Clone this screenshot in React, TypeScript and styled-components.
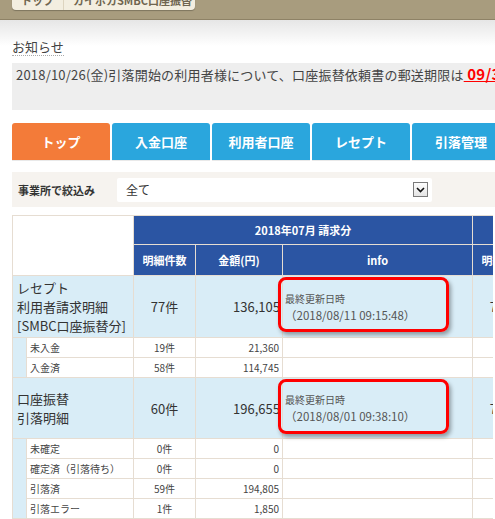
import React from "react";
import styled, { createGlobalStyle } from "styled-components";

const GlobalStyle = createGlobalStyle`
  html, body {
    margin: 0;
    padding: 0;
    background: #fff;
  }
  body {
    width: 495px;
    height: 519px;
    overflow: hidden;
    font-family: "Noto Sans CJK JP", "DejaVu Sans", sans-serif;
    color: #333;
  }
`;

const TopBar = styled.div`
  display: flex;
  align-items: flex-start;
  height: 19px;
  background: #a89c7e;
  border-bottom: 1px solid #8e8266;
  padding-left: 12px;
  overflow: hidden;
`;

const Crumbs = styled.div`
  display: flex;
  margin-top: -9px;
  height: 19px;
  background: #f3eee0;
  border-radius: 0 0 4px 4px;
  box-shadow: 0 1px 1px rgba(0, 0, 0, 0.25);
  font-size: 11px;
  font-weight: bold;
  color: #6f6550;
`;

const Crumb = styled.span<{ $w: number }>`
  width: ${(p) => p.$w}px;
  box-sizing: border-box;
  padding-left: 9px;
  line-height: 19px;
  white-space: nowrap;
  & + & {
    border-left: 1px solid #ddd4bf;
  }
`;

const Content = styled.div`
  display: flex;
  flex-direction: column;
  width: 495px;
  box-sizing: border-box;
  padding-left: 12px;
  overflow: hidden;
  background: linear-gradient(#e6e6e6 0, #fff 26px) no-repeat;
`;

const Heading = styled.h2`
  align-self: flex-start;
  margin: 19px 0 0;
  font-size: 13px;
  font-weight: normal;
  line-height: 16px;
  color: #444;
  border-bottom: 1px dotted #aaa;
`;

const Notice = styled.div`
  margin-top: 7px;
  width: 520px;
  height: 47px;
  box-sizing: border-box;
  padding: 2px 0 0 4px;
  background: #eeeeee;
  font-size: 13px;
  letter-spacing: 0.2px;
  line-height: 18px;
  color: #444;
  white-space: nowrap;
  overflow: hidden;
`;

const Deadline = styled.span`
  color: #f00;
  font-weight: bold;
  font-size: 15px;
  text-decoration: underline;
`;

const Tabs = styled.nav`
  display: flex;
  gap: 2px;
  margin-top: 13px;
  width: 540px;
`;

const Tab = styled.div<{ $active?: boolean }>`
  flex: 0 0 98px;
  height: 37px;
  display: flex;
  align-items: center;
  justify-content: center;
  border-radius: 3px 3px 0 0;
  background: ${(p) => (p.$active ? "#f37b39" : "#2aa6dd")};
  color: #fff;
  font-size: 13px;
  font-weight: bold;
  box-shadow: 0 1px 0 #e9e9e9;
`;

const Filter = styled.div`
  display: flex;
  align-items: center;
  margin-top: 12px;
  width: 520px;
  height: 35px;
  background: #f6f3ef;
`;

const FilterLabel = styled.span`
  width: 105px;
  padding-left: 6px;
  box-sizing: border-box;
  font-size: 11px;
  font-weight: bold;
  color: #333;
`;

const Select = styled.div`
  width: 315px;
  height: 24px;
  box-sizing: border-box;
  display: flex;
  align-items: center;
  justify-content: space-between;
  padding: 0 4px 0 9px;
  background: #fff;
  border-radius: 2px;
  font-size: 12px;
  color: #333;
`;

const Arrow = styled.span`
  width: 15px;
  height: 15px;
  box-sizing: border-box;
  border: 1px solid #7a7a7a;
  background: linear-gradient(#fdfdfd, #e4e4e4);
  display: flex;
  align-items: center;
  justify-content: center;
`;

const TableWrap = styled.div`
  margin-top: 8px;
  width: 481px;
  overflow: hidden;
`;

const Table = styled.table`
  border-collapse: collapse;
  table-layout: fixed;
  width: 799px;
`;

const Col = styled.col<{ $w: number }>`
  width: ${(p) => p.$w}px;
`;

const Cell = styled.td`
  border: 1px solid #e6ddd2;
  padding: 0;
  vertical-align: middle;
`;

const Corner = styled(Cell)`
  background: #fff;
`;

const HeadCell = styled(Cell).attrs({ as: "th" })<{ $h: number }>`
  height: ${(p) => p.$h}px;
  background: #2b55a3;
  color: #fff;
  font-size: 11px;
  font-weight: bold;
  text-align: center;
`;

const MainLabel = styled(Cell)<{ $h: number }>`
  height: ${(p) => p.$h}px;
  background: #d9edf7;
  padding: 1px 0 1px 4px;
  font-size: 13px;
  line-height: 19px;
  color: #333;
  white-space: nowrap;
`;

const MainCount = styled(Cell)`
  background: #d9edf7;
  text-align: center;
  font-size: 13px;
`;

const MainAmount = styled(Cell)`
  background: #d9edf7;
  text-align: right;
  padding-right: 2px;
  font-size: 13px;
`;

const InfoCell = styled(Cell)`
  position: relative;
  background: #d9edf7;
  padding-left: 2px;
  color: #555;
  font-size: 10px;
  line-height: 16px;
`;

const InfoDate = styled.div`
  font-size: 11.5px;
`;

const Highlight = styled.div<{ $top: number }>`
  position: absolute;
  left: -5px;
  top: ${(p) => p.$top}px;
  width: 171px;
  height: 55px;
  box-sizing: border-box;
  border: 3px solid #f00;
  border-radius: 8px;
  box-shadow: 2px 3px 4px rgba(0, 0, 0, 0.35);
`;

const Indent = styled(Cell)`
  background: #d9edf7;
`;

const SubLabel = styled(Cell)`
  height: 19px;
  background: #fff;
  padding-left: 3px;
  font-size: 10px;
  color: #444;
  white-space: nowrap;
`;

const SubCount = styled(Cell)`
  background: #fff;
  text-align: center;
  font-size: 10px;
  color: #444;
`;

const SubAmount = styled(Cell)`
  background: #fff;
  text-align: right;
  padding-right: 3px;
  font-size: 10px;
  color: #444;
`;

const SubBlank = styled(Cell)`
  background: #fff;
`;

type Figure = { count: string; amount: string };
type Sub = { label: string; jul: Figure; aug: Figure };
type Group = {
  lines: string[];
  height: number;
  jul: Figure;
  aug: Figure;
  updated: string;
  boxTop: number;
  subs: Sub[];
};

const groups: Group[] = [
  {
    lines: ["レセプト", "利用者請求明細", "[SMBC口座振替分]"],
    height: 59,
    jul: { count: "77件", amount: "136,105" },
    aug: { count: "76件", amount: "134,220" },
    updated: "（2018/08/11 09:15:48）",
    boxTop: 1,
    subs: [
      { label: "未入金", jul: { count: "19件", amount: "21,360" }, aug: { count: "18件", amount: "20,410" } },
      { label: "入金済", jul: { count: "58件", amount: "114,745" }, aug: { count: "58件", amount: "113,810" } },
    ],
  },
  {
    lines: ["口座振替", "引落明細"],
    height: 58,
    jul: { count: "60件", amount: "196,655" },
    aug: { count: "71件", amount: "205,930" },
    updated: "（2018/08/01 09:38:10）",
    boxTop: 1,
    subs: [
      { label: "未確定", jul: { count: "0件", amount: "0" }, aug: { count: "0件", amount: "0" } },
      { label: "確定済（引落待ち）", jul: { count: "0件", amount: "0" }, aug: { count: "71件", amount: "205,930" } },
      { label: "引落済", jul: { count: "59件", amount: "194,805" }, aug: { count: "0件", amount: "0" } },
      { label: "引落エラー", jul: { count: "1件", amount: "1,850" }, aug: { count: "0件", amount: "0" } },
    ],
  },
];

const tabs = ["トップ", "入金口座", "利用者口座", "レセプト", "引落管理"];

function GroupRows({ g }: { g: Group }) {
  return (
    <>
      <tr>
        <MainLabel colSpan={2} $h={g.height}>
          {g.lines.map((l) => (
            <div key={l}>{l}</div>
          ))}
        </MainLabel>
        <MainCount>{g.jul.count}</MainCount>
        <MainAmount>{g.jul.amount}</MainAmount>
        <InfoCell>
          <div>最終更新日時</div>
          <InfoDate>{g.updated}</InfoDate>
          <Highlight $top={g.boxTop} />
        </InfoCell>
        <MainCount>{g.aug.count}</MainCount>
        <MainAmount>{g.aug.amount}</MainAmount>
        <InfoCell />
      </tr>
      {g.subs.map((s, i) => (
        <tr key={s.label}>
          {i === 0 && <Indent rowSpan={g.subs.length} />}
          <SubLabel>{s.label}</SubLabel>
          <SubCount>{s.jul.count}</SubCount>
          <SubAmount>{s.jul.amount}</SubAmount>
          <SubBlank />
          <SubCount>{s.aug.count}</SubCount>
          <SubAmount>{s.aug.amount}</SubAmount>
          <SubBlank />
        </tr>
      ))}
    </>
  );
}

export default function App() {
  return (
    <>
      <GlobalStyle />
      <TopBar>
        <Crumbs>
          <Crumb $w={51}>トップ</Crumb>
          <Crumb $w={132}>カイポカSMBC口座振替</Crumb>
        </Crumbs>
      </TopBar>
      <Content>
        <Heading>お知らせ</Heading>
        <Notice>
          2018/10/26(金)引落開始の利用者様について、口座振替依頼書の郵送期限は
          <Deadline> 09/30(日)</Deadline>
        </Notice>
        <Tabs>
          {tabs.map((t, i) => (
            <Tab key={t} $active={i === 0}>
              {t}
            </Tab>
          ))}
        </Tabs>
        <Filter>
          <FilterLabel>事業所で絞込み</FilterLabel>
          <Select>
            全て
            <Arrow>
              <svg width="9" height="6" viewBox="0 0 9 6">
                <path d="M1 1 L4.5 4.5 L8 1" fill="none" stroke="#111" strokeWidth="1.6" />
              </svg>
            </Arrow>
          </Select>
        </Filter>
        <TableWrap>
          <Table>
            <colgroup>
              <Col $w={14} />
              <Col $w={107} />
              <Col $w={62} />
              <Col $w={87} />
              <Col $w={190} />
              <Col $w={62} />
              <Col $w={87} />
              <Col $w={190} />
            </colgroup>
            <thead>
              <tr>
                <Corner colSpan={2} rowSpan={2} />
                <HeadCell colSpan={3} $h={28}>
                  2018年07月 請求分
                </HeadCell>
                <HeadCell colSpan={3} $h={28}>
                  2018年08月 請求分
                </HeadCell>
              </tr>
              <tr>
                <HeadCell $h={30}>明細件数</HeadCell>
                <HeadCell $h={30}>金額(円)</HeadCell>
                <HeadCell $h={30}>info</HeadCell>
                <HeadCell $h={30}>明細件数</HeadCell>
                <HeadCell $h={30}>金額(円)</HeadCell>
                <HeadCell $h={30}>info</HeadCell>
              </tr>
            </thead>
            <tbody>
              {groups.map((g) => (
                <GroupRows key={g.updated} g={g} />
              ))}
            </tbody>
          </Table>
        </TableWrap>
      </Content>
    </>
  );
}
